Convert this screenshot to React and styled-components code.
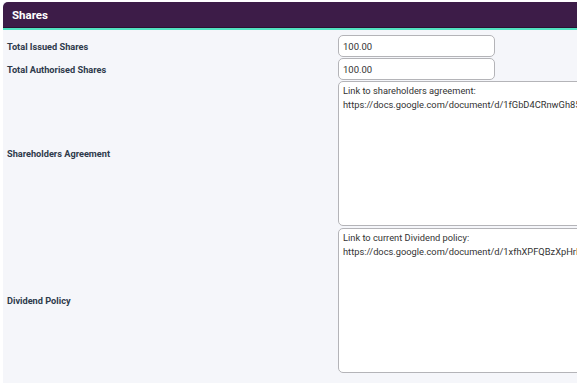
import React from 'react';
import styled, { createGlobalStyle } from 'styled-components';

const GlobalStyle = createGlobalStyle`
    html, body {
        margin: 0;
        padding: 0;
        background: #ffffff;
        overflow: hidden;
    }
    body {
        font-family: Roboto, "Liberation Sans", sans-serif;
    }
`

const Panel = styled.section`
    margin: 2px 0 0 3px;
    width: 574px;
    height: 381px;
    overflow: hidden;
    background-color: #f5f6fa;
`

const Header = styled.header`
    height: 25px;
    display: flex;
    align-items: center;
    padding-left: 9px;
    background-color: #3d1c48;
    border-top-left-radius: 5px;
    border-bottom: 1px solid #2a1133;
    box-shadow: 0 2px 0 #52e2c1;
    color: white;
    font-family: Roboto, sans-serif;
    font-size: 11.5px;
    font-weight: 700;
`

const Form = styled.div`
    display: flex;
    flex-direction: column;
    gap: 1px;
    padding-top: 7px;
`

const Row = styled.div`
    display: grid;
    grid-template-columns: 335px 1fr;
    align-items: center;
`

const Label = styled.label`
    padding-left: 4px;
    font-family: Roboto, sans-serif;
    font-size: 9.2px;
    font-weight: 700;
    color: #2e3a4b;
`

const Input = styled.input`
    box-sizing: border-box;
    width: 157px;
    height: 22px;
    padding: 0 4px;
    border: 1px solid #b4b4b8;
    border-radius: 5px;
    background: white;
    font-family: Roboto, sans-serif;
    font-size: 9.5px;
    color: #333;
    outline: none;
`

const TextArea = styled.textarea`
    box-sizing: border-box;
    width: 300px;
    height: 145px;
    margin-top: ${p => p.$offset || 0}px;
    padding: 2px 4px;
    border: 1px solid #b4b4b8;
    border-radius: 5px;
    background: white;
    font-family: Roboto, sans-serif;
    font-size: 9.3px;
    line-height: 14px;
    color: #333;
    resize: none;
    outline: none;
    overflow: hidden;
    white-space: pre;
`

export default function App() {
    return (
        <>
            <GlobalStyle />
            <Panel>
                <Header>Shares</Header>
                <Form>
                    <Row>
                        <Label>Total Issued Shares</Label>
                        <Input defaultValue="100.00" />
                    </Row>
                    <Row>
                        <Label>Total Authorised Shares</Label>
                        <Input defaultValue="100.00" />
                    </Row>
                    <Row>
                        <Label>Shareholders Agreement</Label>
                        <TextArea defaultValue={"Link to shareholders agreement:\nhttps://docs.google.com/document/d/1fGbD4CRnwGh85s"} />
                    </Row>
                    <Row>
                        <Label>Dividend Policy</Label>
                        <TextArea $offset={1} defaultValue={"Link to current Dividend policy:\nhttps://docs.google.com/document/d/1xfhXPFQBzXpHrF"} />
                    </Row>
                </Form>
            </Panel>
        </>
    )
}
